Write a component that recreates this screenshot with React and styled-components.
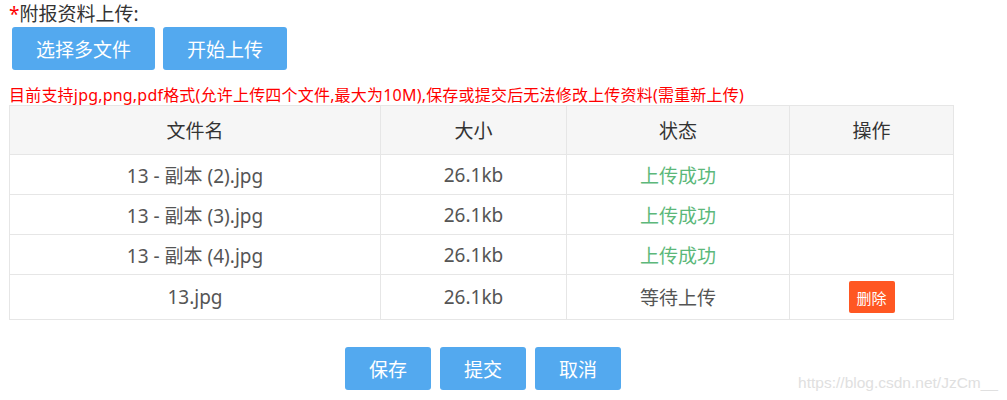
import React from "react";
import styled, { createGlobalStyle } from "styled-components";

const GlobalStyle = createGlobalStyle`
  body {
    margin: 0;
    background: #fff;
    font-family: "Noto Sans", "Noto Sans CJK SC", sans-serif;
  }
`

const Page = styled.div`
  position: relative;
  width: 1007px;
  height: 400px;
  padding: 0 0 0 9px;
  box-sizing: border-box;
`

const Title = styled.div`
  font-size: 19px;
  line-height: 28px;
  color: #333;
`

const Star = styled.span`
  color: #ff0000;
`

const ButtonRow = styled.div`
  display: flex;
  gap: 8px;
  padding-left: 3px;
  margin-top: -1px;
`

const BlueButton = styled.button`
  height: 43px;
  padding: 0 24px;
  border: none;
  border-radius: 3px;
  background: #53a9ef;
  color: #fff;
  font-family: "Noto Sans CJK SC", sans-serif;
  font-size: 19px;
  cursor: pointer;
`

const Note = styled.div`
  margin-top: 15px;
  font-size: 16px;
  line-height: 20px;
  letter-spacing: 0.2px;
  color: #ff0000;
  font-family: "Noto Sans", "Noto Sans CJK SC", sans-serif;
`

const Table = styled.table`
  width: 940px;
  border-collapse: collapse;
  table-layout: fixed;
  font-size: 19px;
  color: #555;
`

const HeadCell = styled.th`
  height: 48px;
  padding: 0;
  background: #f6f6f6;
  border: 1px solid #e6e6e6;
  font-weight: normal;
  color: #333;
  width: ${p => p.$w}px;
`

const Cell = styled.td`
  height: ${p => (p.$tall ? 44 : 39)}px;
  padding: 0;
  border: 1px solid #e6e6e6;
  text-align: center;
  color: ${p => (p.$ok ? "#5cb87a" : "#555")};
`

const DeleteButton = styled.button`
  height: 32px;
  width: 46px;
  border: none;
  border-radius: 2px;
  background: #ff5722;
  color: #fff;
  font-family: "Noto Sans CJK SC", sans-serif;
  font-size: 15px;
  padding: 0;
  vertical-align: middle;
`

const Actions = styled.div`
  width: 943px;
  display: flex;
  justify-content: center;
  gap: 9px;
  margin-top: 27px;
  padding-left: 5px;
  box-sizing: border-box;
`

const Watermark = styled.div`
  position: absolute;
  right: 9px;
  bottom: 8px;
  font-family: "Liberation Sans", Arial, sans-serif;
  font-size: 15.5px;
  color: #e0e0e0;
`

const files = [
  { name: "13 - 副本 (2).jpg", size: "26.1kb", status: "上传成功", ok: true },
  { name: "13 - 副本 (3).jpg", size: "26.1kb", status: "上传成功", ok: true },
  { name: "13 - 副本 (4).jpg", size: "26.1kb", status: "上传成功", ok: true },
  { name: "13.jpg", size: "26.1kb", status: "等待上传", ok: false },
];

export default function App() {
  return (
    <Page>
      <GlobalStyle />
      <Title>
        <Star>*</Star>附报资料上传:
      </Title>
      <ButtonRow>
        <BlueButton>选择多文件</BlueButton>
        <BlueButton>开始上传</BlueButton>
      </ButtonRow>
      <Note>
        目前支持jpg,png,pdf格式(允许上传四个文件,最大为10M),保存或提交后无法修改上传资料(需重新上传)
      </Note>
      <Table>
        <thead>
          <tr>
            <HeadCell $w={370}>文件名</HeadCell>
            <HeadCell $w={185}>大小</HeadCell>
            <HeadCell $w={222}>状态</HeadCell>
            <HeadCell $w={163}>操作</HeadCell>
          </tr>
        </thead>
        <tbody>
          {files.map((f, i) => (
            <tr key={i}>
              <Cell $tall={!f.ok}>{f.name}</Cell>
              <Cell $tall={!f.ok}>{f.size}</Cell>
              <Cell $tall={!f.ok} $ok={f.ok}>{f.status}</Cell>
              <Cell $tall={!f.ok}>
                {!f.ok && <DeleteButton>删除</DeleteButton>}
              </Cell>
            </tr>
          ))}
        </tbody>
      </Table>
      <Actions>
        <BlueButton>保存</BlueButton>
        <BlueButton>提交</BlueButton>
        <BlueButton>取消</BlueButton>
      </Actions>
      <Watermark>https://blog.csdn.net/JzCm__</Watermark>
    </Page>
  );
}
